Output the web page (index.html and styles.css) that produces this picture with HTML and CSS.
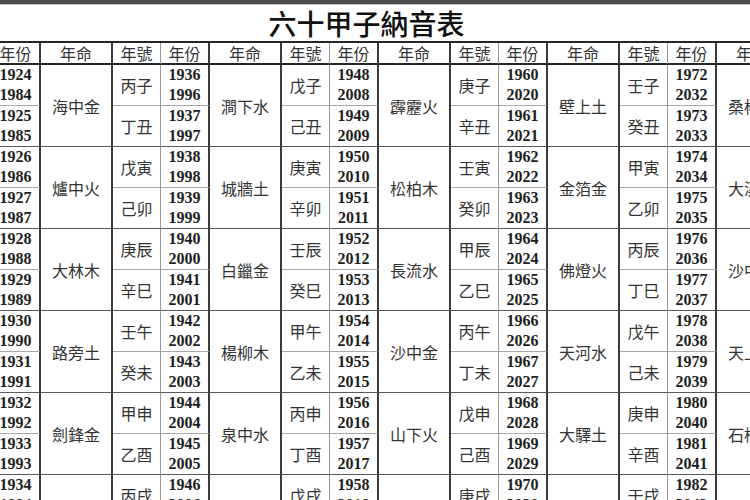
FILE: index.html
```html
<!DOCTYPE html>
<html lang="zh-Hant">
<head>
<meta charset="utf-8">
<title>六十甲子納音表</title>
<link rel="stylesheet" href="styles.css">
</head>
<body>
<div class="page">
  <div class="topbar"></div>
  <div class="sheet">
    <h1 class="title">六十甲子納音表</h1>
    <div class="grid">
      <div class="hd gz">年號</div><div class="hd yr">年份</div><div class="hd ny">年命</div>
      <div class="hd gz">年號</div><div class="hd yr">年份</div><div class="hd ny">年命</div>
      <div class="hd gz">年號</div><div class="hd yr">年份</div><div class="hd ny">年命</div>
      <div class="hd gz">年號</div><div class="hd yr">年份</div><div class="hd ny">年命</div>
      <div class="hd gz">年號</div><div class="hd yr">年份</div><div class="hd ny">年命</div>

      <div class="gz a">甲子</div><div class="yr a">1924<br>1984</div><div class="ny">海中金</div>
      <div class="gz a">丙子</div><div class="yr a">1936<br>1996</div><div class="ny">澗下水</div>
      <div class="gz a">戊子</div><div class="yr a">1948<br>2008</div><div class="ny">霹靂火</div>
      <div class="gz a">庚子</div><div class="yr a">1960<br>2020</div><div class="ny">壁上土</div>
      <div class="gz a">壬子</div><div class="yr a">1972<br>2032</div><div class="ny">桑柘木</div>
      <div class="gz b">乙丑</div><div class="yr b">1925<br>1985</div>
      <div class="gz b">丁丑</div><div class="yr b">1937<br>1997</div>
      <div class="gz b">己丑</div><div class="yr b">1949<br>2009</div>
      <div class="gz b">辛丑</div><div class="yr b">1961<br>2021</div>
      <div class="gz b">癸丑</div><div class="yr b">1973<br>2033</div>

      <div class="gz a">丙寅</div><div class="yr a">1926<br>1986</div><div class="ny">爐中火</div>
      <div class="gz a">戊寅</div><div class="yr a">1938<br>1998</div><div class="ny">城牆土</div>
      <div class="gz a">庚寅</div><div class="yr a">1950<br>2010</div><div class="ny">松柏木</div>
      <div class="gz a">壬寅</div><div class="yr a">1962<br>2022</div><div class="ny">金箔金</div>
      <div class="gz a">甲寅</div><div class="yr a">1974<br>2034</div><div class="ny">大溪水</div>
      <div class="gz b">丁卯</div><div class="yr b">1927<br>1987</div>
      <div class="gz b">己卯</div><div class="yr b">1939<br>1999</div>
      <div class="gz b">辛卯</div><div class="yr b">1951<br>2011</div>
      <div class="gz b">癸卯</div><div class="yr b">1963<br>2023</div>
      <div class="gz b">乙卯</div><div class="yr b">1975<br>2035</div>

      <div class="gz a">戊辰</div><div class="yr a">1928<br>1988</div><div class="ny">大林木</div>
      <div class="gz a">庚辰</div><div class="yr a">1940<br>2000</div><div class="ny">白鑞金</div>
      <div class="gz a">壬辰</div><div class="yr a">1952<br>2012</div><div class="ny">長流水</div>
      <div class="gz a">甲辰</div><div class="yr a">1964<br>2024</div><div class="ny">佛燈火</div>
      <div class="gz a">丙辰</div><div class="yr a">1976<br>2036</div><div class="ny">沙中土</div>
      <div class="gz b">己巳</div><div class="yr b">1929<br>1989</div>
      <div class="gz b">辛巳</div><div class="yr b">1941<br>2001</div>
      <div class="gz b">癸巳</div><div class="yr b">1953<br>2013</div>
      <div class="gz b">乙巳</div><div class="yr b">1965<br>2025</div>
      <div class="gz b">丁巳</div><div class="yr b">1977<br>2037</div>

      <div class="gz a">庚午</div><div class="yr a">1930<br>1990</div><div class="ny">路旁土</div>
      <div class="gz a">壬午</div><div class="yr a">1942<br>2002</div><div class="ny">楊柳木</div>
      <div class="gz a">甲午</div><div class="yr a">1954<br>2014</div><div class="ny">沙中金</div>
      <div class="gz a">丙午</div><div class="yr a">1966<br>2026</div><div class="ny">天河水</div>
      <div class="gz a">戊午</div><div class="yr a">1978<br>2038</div><div class="ny">天上火</div>
      <div class="gz b">辛未</div><div class="yr b">1931<br>1991</div>
      <div class="gz b">癸未</div><div class="yr b">1943<br>2003</div>
      <div class="gz b">乙未</div><div class="yr b">1955<br>2015</div>
      <div class="gz b">丁未</div><div class="yr b">1967<br>2027</div>
      <div class="gz b">己未</div><div class="yr b">1979<br>2039</div>

      <div class="gz a">壬申</div><div class="yr a">1932<br>1992</div><div class="ny">劍鋒金</div>
      <div class="gz a">甲申</div><div class="yr a">1944<br>2004</div><div class="ny">泉中水</div>
      <div class="gz a">丙申</div><div class="yr a">1956<br>2016</div><div class="ny">山下火</div>
      <div class="gz a">戊申</div><div class="yr a">1968<br>2028</div><div class="ny">大驛土</div>
      <div class="gz a">庚申</div><div class="yr a">1980<br>2040</div><div class="ny">石榴木</div>
      <div class="gz b">癸酉</div><div class="yr b">1933<br>1993</div>
      <div class="gz b">乙酉</div><div class="yr b">1945<br>2005</div>
      <div class="gz b">丁酉</div><div class="yr b">1957<br>2017</div>
      <div class="gz b">己酉</div><div class="yr b">1969<br>2029</div>
      <div class="gz b">辛酉</div><div class="yr b">1981<br>2041</div>

      <div class="gz a">甲戌</div><div class="yr a">1934<br>1994</div><div class="ny">山頭火</div>
      <div class="gz a">丙戌</div><div class="yr a">1946<br>2006</div><div class="ny">屋上土</div>
      <div class="gz a">戊戌</div><div class="yr a">1958<br>2018</div><div class="ny">平地木</div>
      <div class="gz a">庚戌</div><div class="yr a">1970<br>2030</div><div class="ny">釵釧金</div>
      <div class="gz a">壬戌</div><div class="yr a">1982<br>2042</div><div class="ny">大海水</div>
      <div class="gz b">乙亥</div><div class="yr b">1935<br>1995</div>
      <div class="gz b">丁亥</div><div class="yr b">1947<br>2007</div>
      <div class="gz b">己亥</div><div class="yr b">1959<br>2019</div>
      <div class="gz b">辛亥</div><div class="yr b">1971<br>2031</div>
      <div class="gz b">癸亥</div><div class="yr b">1983<br>2043</div>
    </div>
  </div>
</div>
</body>
</html>
```

FILE: styles.css
```css
html, body {
  margin: 0;
  padding: 0;
  background: #ffffff;
}

.page {
  width: 750px;
  height: 500px;
  overflow: hidden;
  background: #ffffff;
}

.topbar {
  height: 4px;
  background: #4e4e4e;
  border-bottom: 1px solid #c4c4c4;
}

.sheet {
  width: 845px;
  margin-left: -56px;
}

.title {
  margin: 0;
  height: 36px;
  line-height: 36px;
  text-align: center;
  font-family: "Noto Sans CJK TC", "Noto Sans CJK SC", sans-serif;
  font-size: 28px;
  font-weight: 500;
  color: #111111;
  letter-spacing: 0;
}

.grid {
  display: grid;
  grid-template-columns: repeat(5, 48px 49px 72px);
  grid-template-rows: 22px repeat(12, 41px);
  border-top: 2px solid #262626;
}

.grid > div {
  box-sizing: border-box;
  display: flex;
  align-items: center;
  justify-content: center;
  text-align: center;
  font-family: "Noto Sans CJK TC", "Noto Sans CJK SC", sans-serif;
  font-size: 16px;
  color: #333333;
}

.gz {
  border-right: 1px solid #9a9a9a;
}

.yr,
.ny {
  border-right: 2px solid #3a3a3a;
}

.grid > .yr {
  font-family: "Liberation Serif", "Times New Roman", serif;
  font-weight: 700;
  font-size: 16px;
  line-height: 20px;
  color: #1e1e1e;
}

.grid > .hd {
  font-family: "Noto Sans CJK TC", "Noto Sans CJK SC", sans-serif;
  font-weight: 400;
  font-size: 16px;
  line-height: 20px;
  color: #333333;
  border-bottom: 2px solid #262626;
}

.ny {
  grid-row: span 2;
  border-bottom: 1px solid #5a5a5a;
}

.grid > .ny.hd {
  grid-row: span 1;
}

.a {
  border-bottom: 1px solid #a8a8a8;
}

.b {
  border-bottom: 1px solid #5a5a5a;
}
```
